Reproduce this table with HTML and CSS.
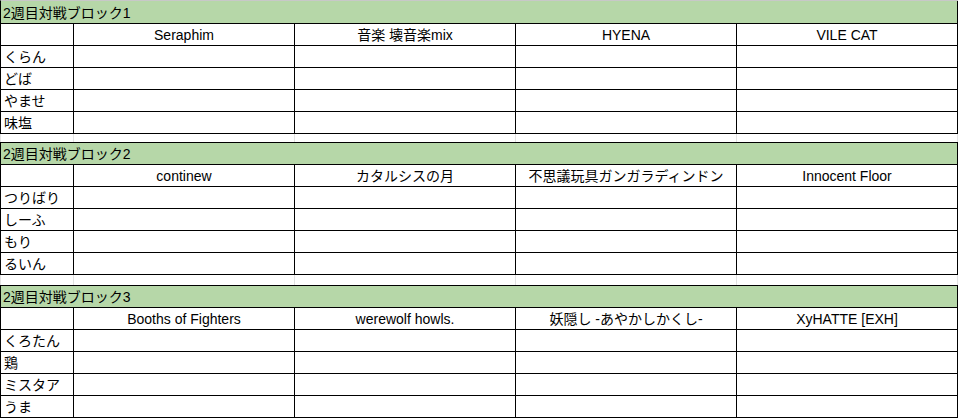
FILE: index.html
```html
<!DOCTYPE html>
<html lang="ja">
<head>
<meta charset="utf-8">
<title>2週目対戦ブロック</title>
<link rel="stylesheet" href="styles.css">
</head>
<body>
<div class="sheet">
  <div class="block block-first">
    <div class="cell title">2週目対戦ブロック1</div>
    <div class="cell"></div>
    <div class="cell head">Seraphim</div>
    <div class="cell head">音楽 壊音楽mix</div>
    <div class="cell head">HYENA</div>
    <div class="cell head">VILE CAT</div>
    <div class="cell label">くらん</div><div class="cell"></div><div class="cell"></div><div class="cell"></div><div class="cell"></div>
    <div class="cell label">どば</div><div class="cell"></div><div class="cell"></div><div class="cell"></div><div class="cell"></div>
    <div class="cell label">やませ</div><div class="cell"></div><div class="cell"></div><div class="cell"></div><div class="cell"></div>
    <div class="cell label">味塩</div><div class="cell"></div><div class="cell"></div><div class="cell"></div><div class="cell"></div>
  </div>
  <div class="gap gap-small"><div></div><div></div><div></div><div></div><div></div></div>
  <div class="block">
    <div class="cell title">2週目対戦ブロック2</div>
    <div class="cell"></div>
    <div class="cell head">continew</div>
    <div class="cell head">カタルシスの月</div>
    <div class="cell head">不思議玩具ガンガラディンドン</div>
    <div class="cell head">Innocent Floor</div>
    <div class="cell label">つりばり</div><div class="cell"></div><div class="cell"></div><div class="cell"></div><div class="cell"></div>
    <div class="cell label">しーふ</div><div class="cell"></div><div class="cell"></div><div class="cell"></div><div class="cell"></div>
    <div class="cell label">もり</div><div class="cell"></div><div class="cell"></div><div class="cell"></div><div class="cell"></div>
    <div class="cell label">るいん</div><div class="cell"></div><div class="cell"></div><div class="cell"></div><div class="cell"></div>
  </div>
  <div class="gap gap-large"><div></div><div></div><div></div><div></div><div></div></div>
  <div class="block">
    <div class="cell title">2週目対戦ブロック3</div>
    <div class="cell"></div>
    <div class="cell head">Booths of Fighters</div>
    <div class="cell head">werewolf howls.</div>
    <div class="cell head">妖隠し -あやかしかくし-</div>
    <div class="cell head">XyHATTE [EXH]</div>
    <div class="cell label">くろたん</div><div class="cell"></div><div class="cell"></div><div class="cell"></div><div class="cell"></div>
    <div class="cell label">鶏</div><div class="cell"></div><div class="cell"></div><div class="cell"></div><div class="cell"></div>
    <div class="cell label">ミスタア</div><div class="cell"></div><div class="cell"></div><div class="cell"></div><div class="cell"></div>
    <div class="cell label">うま</div><div class="cell"></div><div class="cell"></div><div class="cell"></div><div class="cell"></div>
  </div>
</div>
</body>
</html>
```

FILE: styles.css
```css
html, body {
  margin: 0;
  padding: 0;
  background: #ffffff;
}

body {
  font-family: "Liberation Sans", Arial, "Noto Sans CJK JP", sans-serif;
  font-size: 14px;
  color: #000000;
}

.sheet {
  width: 960px;
}

.block {
  display: grid;
  grid-template-columns: 73px 221px 221px 221px 221px;
  grid-auto-rows: 22px;
  width: 957px;
  border-left: 1px solid #000;
  border-top: 1px solid #000;
}

.block-first {
  border-top-color: #c8c8c8;
  grid-template-rows: 23px;
}

.cell {
  border-right: 1px solid #000;
  border-bottom: 1px solid #000;
  display: flex;
  align-items: flex-end;
  line-height: 17px;
  padding: 0 3px 1px;
  overflow: hidden;
  white-space: nowrap;
  min-width: 0;
}

.title {
  grid-column: 1 / -1;
  background: #b6d7a8;
  padding-left: 2px;
}

.head {
  justify-content: center;
}

.label {
  padding-left: 3px;
}

.gap {
  display: grid;
  grid-template-columns: 73px 221px 221px 221px 221px;
  width: 957px;
  border-left: 1px solid #e2e2e2;
}

.gap > div {
  border-right: 1px solid #e2e2e2;
}

.gap-small {
  height: 8px;
}

.gap-large {
  height: 10px;
}
```
